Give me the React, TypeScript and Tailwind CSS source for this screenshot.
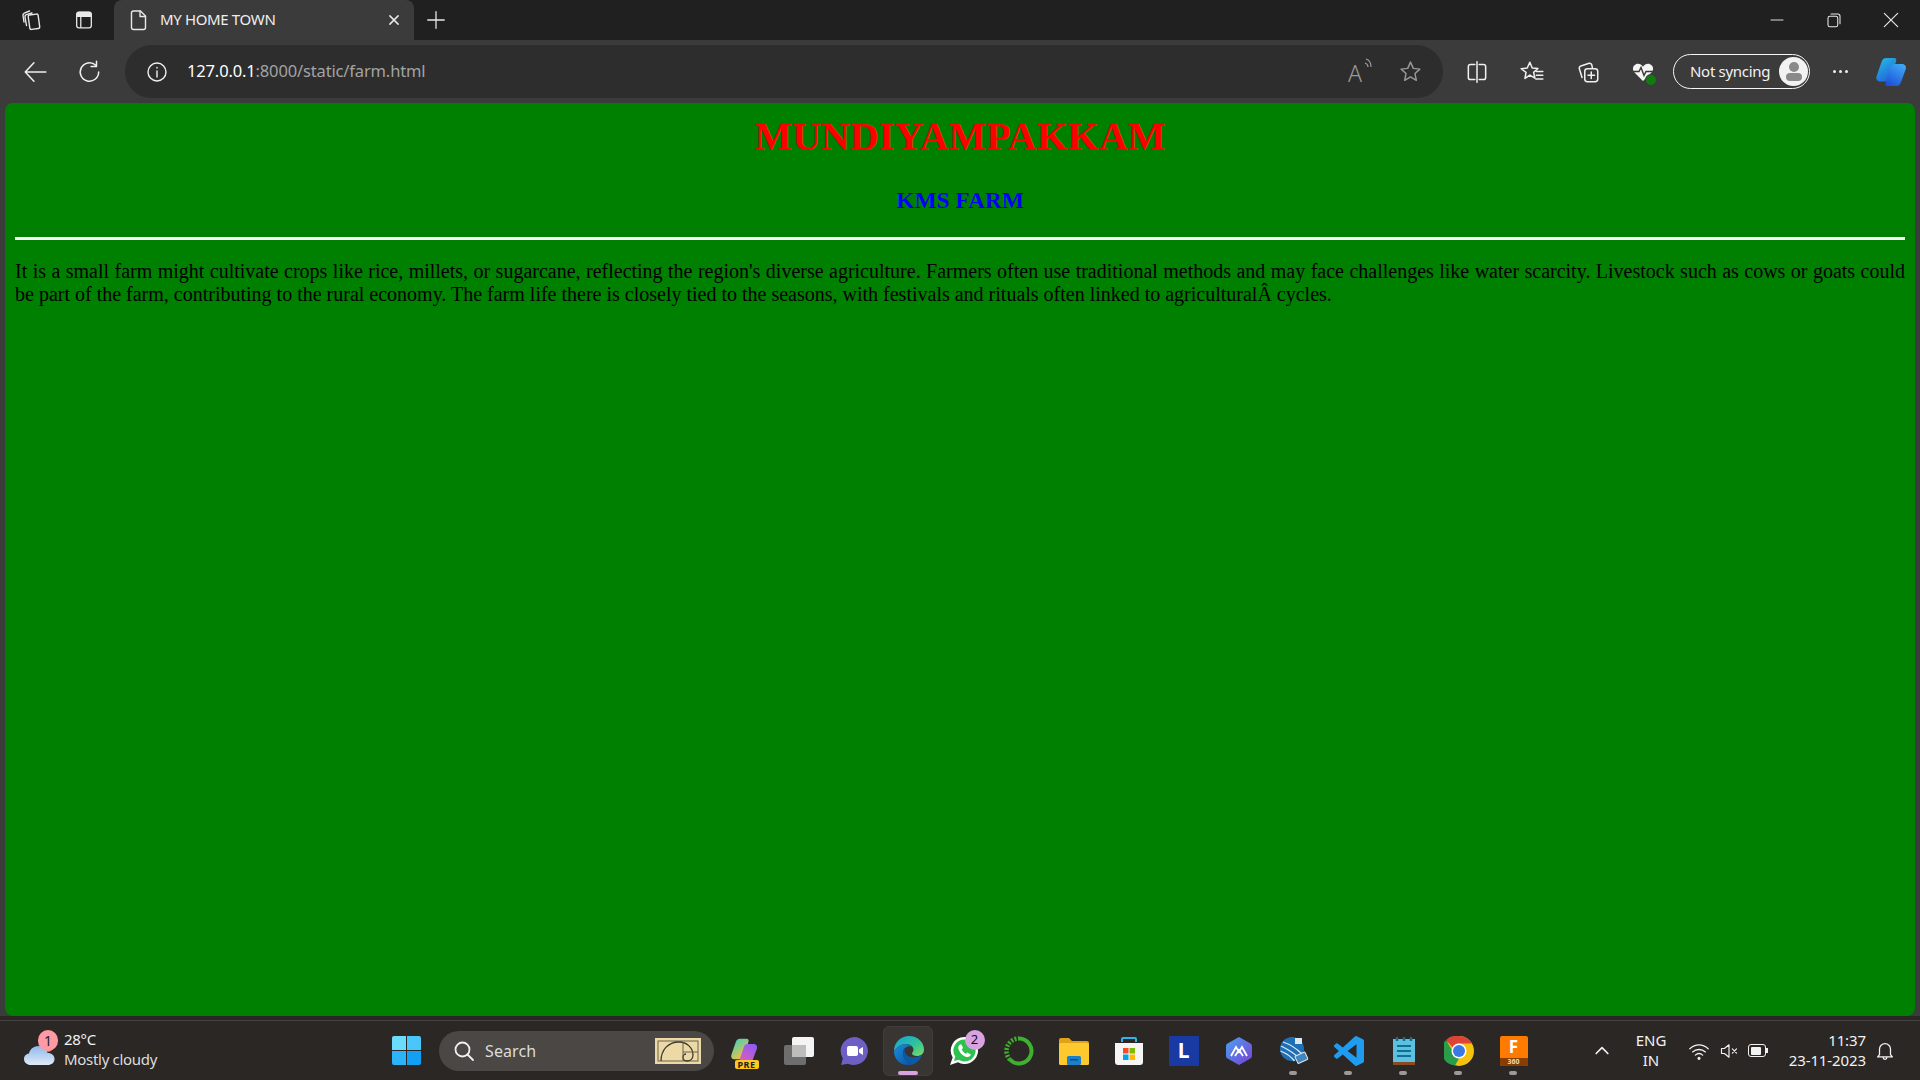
import type { ReactNode } from "react";

const uiFont = "font-['Noto_Sans','Open_Sans',sans-serif]";

function Svg({ size = 20, className = "", children, box = "0 0 24 24" }: { size?: number; className?: string; children: ReactNode; box?: string }) {
  return (
    <svg width={size} height={size} viewBox={box} fill="none" stroke="currentColor" strokeWidth="1.4" strokeLinecap="round" strokeLinejoin="round" className={className}>
      {children}
    </svg>
  );
}

function TabStrip() {
  return (
    <div className="flex h-10 items-stretch bg-[#202020] text-[#e8e8e8]">
      <div className="flex w-[114px] items-center">
        <div className="flex w-[64px] justify-center">
          <Svg size={24}>
            <rect x="9" y="6.5" width="10" height="14.5" rx="1.5" transform="rotate(-8 14 14)" />
            <path d="M6.5 17.5 5 9c-.2-1.2.4-2 1.4-2.3L12 5" />
            <path d="M4 14 3 7.5c-.2-1.2.3-2 1.3-2.4L9.500 3" />
          </Svg>
        </div>
        <div className="flex w-[40px] justify-center">
          <Svg size={22}>
            <rect x="4" y="3.5" width="16" height="17" rx="2.5" />
            <path d="M4.5 5.5c0-1 .8-1.7 1.7-1.7h11.600c1 0 1.700.7 1.700 1.700V8H4.500z" fill="currentColor" />
            <path d="M8.500 8v12" />
          </Svg>
        </div>
      </div>
      <div className="flex w-[300px] items-center rounded-t-lg bg-[#3b3b3b] pl-[14px] pr-[11px]">
        <Svg size={24} className="-ml-[1px]">
          <path d="M6.500 3h7l5 5v11.500a2 2 0 0 1-2 2h-10a2 2 0 0 1-2-2v-14.500a2 2 0 0 1 2-2z" />
          <path d="M13 3v5.500h5.500" />
        </Svg>
        <span className={`${uiFont} ml-[9px] -mt-[2px] flex-1 text-[15px] tracking-[-0.35px] text-[#eeeeee]`}>MY HOME TOWN</span>
        <Svg size={18}>
          <path d="m6.500 6.500 11 11M17.500 6.500l-11 11" strokeWidth="2" />
        </Svg>
      </div>
      <div className="flex w-[43px] items-center justify-center">
        <Svg size={22}>
          <path d="M12 3v18M3 12h18" />
        </Svg>
      </div>
      <div className="flex-1" />
      <div className="flex items-center pr-[1px]">
        <div className="flex w-[57px] justify-center">
          <Svg size={16}>
            <path d="M3 12h18" />
          </Svg>
        </div>
        <div className="flex w-[57px] justify-center">
          <Svg size={18}>
            <rect x="4" y="7" width="13" height="14" rx="2.500" />
            <path d="M8 4h9a3 3 0 0 1 3 3v10" />
          </Svg>
        </div>
        <div className="flex w-[57px] justify-center">
          <Svg size={20}>
            <path d="m4 4 16 16M20 4 4 20" />
          </Svg>
        </div>
      </div>
    </div>
  );
}

function Toolbar() {
  return (
    <div className="flex h-[63px] items-center bg-[#3b3b3b] text-[#f0f0f0]">
      <div className="flex w-[70px] justify-center">
        <Svg size={26}>
          <path d="M3 12h19M11 3.500 3 12l8 8.500" />
        </Svg>
      </div>
      <div className="flex w-[40px] justify-center">
        <Svg size={26}>
          <path d="M20 12a8.500 8.500 0 1 1-2.800-6.300" />
          <path d="M18 2v5h-5" />
        </Svg>
      </div>
      <div className="ml-[15px] flex h-[53px] w-[1318px] items-center rounded-full bg-[#2d2d2d] pl-[20px] pr-[20px]">
        <Svg size={24}>
          <circle cx="12" cy="12" r="9" />
          <path d="M12 11v6M12 7.500v.5" />
        </Svg>
        <span className={`${uiFont} ml-[18px] flex-1 text-[16.500px] tracking-[-0.15px] text-[#a3a3a3]`}>
          <span className="text-white">127.0.0.1</span>:8000/static/farm.html
        </span>
        <div className="flex items-center gap-[24px] text-[#999999]">
          <div className="relative h-6 w-6">
            <span className={`${uiFont} absolute left-[-2px] top-[-4px] text-[23px] font-light`}>A</span>
            <svg width="10" height="14" viewBox="0 0 10 14" fill="none" stroke="currentColor" strokeWidth="1.200" className="absolute right-[0px] top-[-2px]">
              <path d="M2 1c3.500 1 5 4 5 8M1 5c2 .7 3 2.300 3 4" />
            </svg>
          </div>
          <Svg size={25}>
            <path d="m12 3 2.700 6 6.300.7-4.700 4.300 1.300 6.500L12 17.200l-5.600 3.300 1.300-6.500L3 9.700 9.300 9z" />
          </Svg>
        </div>
      </div>
      <div className="ml-[6px] flex w-[55px] justify-center">
        <Svg size={26}>
          <path d="M10 5H6a2 2 0 0 0-2 2v10a2 2 0 0 0 2 2h4M14 5h4a2 2 0 0 1 2 2v10a2 2 0 0 1-2 2h-4M12 2.500v19" />
        </Svg>
      </div>
      <div className="flex w-[56px] justify-center">
        <Svg size={26}>
          <path d="m10 3 2.200 5.300 5.300.5-4 3.600 1.200 5.300-4.700-2.800-4.500 3 1-5.500L2 9l5.600-.7z" />
          <path d="M16 11.500h6M16 15h6M15.500 18.500H22" />
        </Svg>
      </div>
      <div className="flex w-[55px] justify-center">
        <Svg size={26}>
          <rect x="9" y="9" width="12" height="12" rx="2.500" />
          <path d="M15 12v6M12 15h6M6.500 17 4 9a2 2 0 0 1 1.400-2.500L13 4a2 2 0 0 1 2.500 1.500L16 8" />
        </Svg>
      </div>
      <div className="relative flex w-[55px] justify-center">
        <svg width="24" height="24" viewBox="0 0 24 24">
          <path d="M12 21 3.500 12.500C1 10 1.500 5.500 5 4.200c2.700-1 5.500.2 7 2.500 1.500-2.300 4.300-3.500 7-2.500 3.500 1.300 4 5.800 1.500 8.300z" fill="#f5f5f5" />
          <path d="M2 11.500h6l2-4 3 8 2-4h7" fill="none" stroke="#3b3b3b" strokeWidth="1.500" />
        </svg>
        <span className="absolute left-[31px] top-[15px] h-[10px] w-[10px] rounded-full bg-[#107c10] ring-1 ring-[#3b3b3b]" />
      </div>
      <div className="ml-[3px] flex h-[35px] w-[137px] items-center justify-between rounded-full border border-[#f5f5f5] pl-[16px] pr-[1px]">
        <span className={`${uiFont} text-[15px] tracking-[-0.3px] text-[#f2f2f2]`}>Not syncing</span>
        <div className="flex h-[29px] w-[29px] flex-col items-center justify-center rounded-full bg-[#f2f2f2]">
          <span className="h-[10px] w-[10px] rounded-full bg-[#8a8a8a]" />
          <span className="mt-[1px] h-[8px] w-[16px] rounded-full bg-[#8a8a8a]" />
        </div>
      </div>
      <div className="ml-[10px] flex w-[40px] justify-center gap-[3px]">
        <span className="h-[3px] w-[3px] rounded-full bg-[#f0f0f0]" />
        <span className="h-[3px] w-[3px] rounded-full bg-[#f0f0f0]" />
        <span className="h-[3px] w-[3px] rounded-full bg-[#f0f0f0]" />
      </div>
      <div className="ml-[15px] flex justify-center">
        <CopilotIcon size={32} />
      </div>
    </div>
  );
}

function CopilotIcon({ size, variant = "blue" }: { size: number; variant?: "blue" | "pre" }) {
  const a = variant === "blue" ? ["#22c3e6", "#2563d9"] : ["#2fd0c8", "#f5c23d"];
  const b = variant === "blue" ? ["#1d4fd8", "#3fa9f5"] : ["#e35db5", "#8b5cf6"];
  const id = variant;
  return (
    <svg width={size} height={size} viewBox="0 0 32 32">
      <defs>
        <linearGradient id={`${id}a`} x1="0" y1="0" x2="0.6" y2="1">
          <stop offset="0" stopColor={a[0]} />
          <stop offset="1" stopColor={a[1]} />
        </linearGradient>
        <linearGradient id={`${id}b`} x1="0.2" y1="1" x2="0.8" y2="0">
          <stop offset="0" stopColor={b[0]} />
          <stop offset="1" stopColor={b[1]} />
        </linearGradient>
      </defs>
      <path d="M11 2h8c1.800 0 2.700 1.200 2.200 3L15.500 23c-.5 1.500-1.500 2.500-3 2.500H5C2 25.500.8 23 1.500 20.500L6.500 6C7.300 3.500 9 2 11 2z" fill={`url(#${id}a)`} />
      <path d="M20 8h7c3 0 4.500 2.500 3.800 5L26 26c-.8 2.500-2.500 4-4.500 4H12c-1.500 0-2-1-1.600-2.200L16 11c.6-2 2-3 4-3z" fill={`url(#${id}b)`} />
    </svg>
  );
}

function WeatherIcon() {
  return (
    <div className="relative h-[36px] w-[36px]">
      <svg width="36" height="36" viewBox="0 0 36 36" className="absolute left-[1px] top-0">
        <defs>
          <linearGradient id="cloud" x1="0" y1="0" x2="0" y2="1">
            <stop offset="0" stopColor="#8fb8ea" />
            <stop offset="1" stopColor="#dfeaf8" />
          </linearGradient>
        </defs>
        <circle cx="25" cy="14" r="5" fill="#e8801f" />
        <path d="M8 32c-4 0-7-2.500-7-6 0-3 2.200-5.200 5-5.600C7 16 11 13 15.500 13c4.500 0 8 2.800 9 7 4-.2 7 2.300 7 6s-3 6-7 6z" fill="url(#cloud)" />
      </svg>
      <span className="absolute left-[16px] top-[-3px] flex h-[21px] w-[20px] items-center justify-center rounded-full bg-[#ff99a4] text-[14px] text-[#222222]">1</span>
    </div>
  );
}

function EdgeIcon() {
  return (
    <svg width="32" height="32" viewBox="0 0 32 32">
      <defs>
        <linearGradient id="edgeA" x1="0" y1="0" x2="1" y2="1">
          <stop offset="0" stopColor="#17a2e0" />
          <stop offset="0.55" stopColor="#2fc29a" />
          <stop offset="1" stopColor="#7fdc64" />
        </linearGradient>
        <linearGradient id="edgeB" x1="0" y1="0" x2="1" y2="1">
          <stop offset="0" stopColor="#1a8fdd" />
          <stop offset="1" stopColor="#0b4f9e" />
        </linearGradient>
      </defs>
      <path d="M1 16C1 7.500 7.800 1 16 1c8.500 0 15 6 15 13.500 0 4.500-3.500 6.500-7 6.500-3 0-5-1-5-2.500 0-1 1.500-1.500 1.500-4C20.500 11.500 17 9 13 9 8 9 4 12 1 16z" fill="url(#edgeA)" />
      <path d="M1 16c3-4 7-7 12-7 3 0 5 1 6 2.500-4-1-9 1-9 6.500 0 5 4 10 10 11.500-1.500.4-2.800.5-4 .5C7.800 31 1 24.500 1 16z" fill="url(#edgeB)" />
      <path d="M20 29.500c-6-1.500-10-6.500-10-11.500 0-2 .7-3.500 1.800-4.600-.8 3.500 1 7.600 6.200 8.600 4.500.9 8-.5 11-2.500-1.300 4.500-4.500 8.500-9 10z" fill="#0c59a4" />
    </svg>
  );
}

function ChromeIcon() {
  return (
    <svg width="30" height="30" viewBox="0 0 30 30">
      <circle cx="15" cy="15" r="15" fill="#f4c20d" />
      <path d="M15 0a15 15 0 0 1 13 7.500H15a7.500 7.500 0 0 0-6.500 3.750L2 3.900A15 15 0 0 1 15 0z" fill="#db4437" />
      <path d="M2 3.900 8.500 15a7.500 7.500 0 0 0 6.500 7.500l-4 7A15 15 0 0 1 2 3.900z" fill="#2a9d4a" />
      <circle cx="15" cy="15" r="7.500" fill="#ffffff" />
      <circle cx="15" cy="15" r="6" fill="#3b78e7" />
    </svg>
  );
}

function Pin({ children, dot = false, active = false }: { children: ReactNode; dot?: boolean; active?: boolean }) {
  return (
    <div className="relative flex h-[50px] w-[55px] items-center justify-center">
      {active && <span className="absolute inset-y-0 left-[2px] w-[50px] rounded-md border border-[#403d3b] bg-[#383533]" />}
      <div className="relative">{children}</div>
      {dot && <span className="absolute bottom-[1px] left-[23px] h-[4px] w-[8px] rounded-full bg-[#9a9a9a]" />}
      {active && <span className="absolute bottom-[1px] left-[17px] h-[4px] w-[20px] rounded-full bg-[#d8a3e0]" />}
    </div>
  );
}

function Taskbar() {
  return (
    <div className={`${uiFont} flex h-[60px] items-center border-t border-[#454341] bg-[#2a2725] text-[#f2f2f2]`}>
      <div className="flex w-[392px] items-center pl-[22px]">
        <WeatherIcon />
        <div className="ml-[6px] -mt-[3px] flex flex-col text-[15px] leading-[20px] tracking-[-0.3px]">
          <span>28°C</span>
          <span className="text-[#dddddd]">Mostly cloudy</span>
        </div>
      </div>
      {/* start button */}
      <div className="grid h-[29px] w-[29px] grid-cols-2 gap-[1px]">
        <span className="rounded-tl-[2px] bg-[#6bdcfb]" />
        <span className="rounded-tr-[2px] bg-[#4bc6fa]" />
        <span className="rounded-bl-[2px] bg-[#2cb4f8]" />
        <span className="rounded-br-[2px] bg-[#12a0f5]" />
      </div>
      <div className="ml-[18px] flex h-[40px] w-[275px] items-center rounded-full bg-[#4a4745] pl-[13px] pr-[13px]">
        <Svg size={24} className="text-[#f0f0f0]">
          <circle cx="10.500" cy="10.500" r="7" strokeWidth="1.800" />
          <path d="m15.500 15.500 5.500 5.500" strokeWidth="1.800" />
        </Svg>
        <span className="ml-[9px] flex-1 text-[16px] tracking-[0.1px] text-[#dcdcdc]">Search</span>
        <svg width="46" height="26" viewBox="0 0 46 26">
          <rect width="46" height="26" fill="#ecd9a6" />
          <rect x="3" y="3" width="40" height="20" fill="none" stroke="#6b6350" />
          <path d="M6 23c0-11 7-19 18-19 8 0 14 6 14 13 0 4-3 6-6 6-3 0-4-2-4-4 0-2 2-3 3-3" fill="none" stroke="#3c3a30" strokeWidth="1.300" />
          <path d="M28 4v19M28 14h15" stroke="#6b6350" fill="none" />
        </svg>
      </div>
      <div className="ml-[2px] flex items-center">
        <Pin>
          <div className="relative">
            <CopilotIcon size={28} variant="pre" />
            <span className="absolute bottom-[-4px] left-[5px] rounded-[2px] bg-[#ffc81e] px-[3px] text-[9px] font-bold leading-[9px] tracking-[0.5px] text-[#222222]">PRE</span>
          </div>
        </Pin>
        <Pin>
          <div className="relative h-[28px] w-[30px]">
            <span className="absolute bottom-0 left-0 h-[20px] w-[22px] rounded-[2px] bg-[#6e6e6e]" />
            <span className="absolute right-0 top-0 h-[20px] w-[22px] rounded-[2px] bg-[#f4f4f4]" />
            <span className="absolute left-[8px] top-[8px] h-[12px] w-[14px] bg-[#bdbdbd]" />
          </div>
        </Pin>
        <Pin>
          <svg width="30" height="30" viewBox="0 0 30 30">
            <path d="M15 1a14 14 0 1 1-6 26.700L2 29l1.800-6.500A14 14 0 0 1 15 1z" fill="#6d5fc4" />
            <rect x="8" y="10" width="11" height="10" rx="2" fill="#ffffff" />
            <path d="m20 13.500 4-2.500v8l-4-2.500z" fill="#ffffff" />
          </svg>
        </Pin>
        <Pin active>
          <EdgeIcon />
        </Pin>
        <Pin>
          <div className="relative">
            <svg width="30" height="30" viewBox="0 0 30 30">
              <path d="M15.500 1a13.500 13.500 0 1 1-6.500 25.300L1 29l2.700-7.600A13.500 13.500 0 0 1 15.500 1z" fill="#ffffff" />
              <path d="M15.500 3.500a11 11 0 1 1-5.800 20.300L5 25l1.300-4.400A11 11 0 0 1 15.500 3.500z" fill="#2fc14f" />
              <path d="M11 8.500c-1.500 1-2.500 3-1 6 1.500 3 4.500 6 8 6.500 2 .3 3.500-1 3.800-2.500l-3.300-2-1.500 1.300c-2-.8-3.500-2.500-4.300-4.300l1.300-1.500-1.500-3.500z" fill="#ffffff" />
            </svg>
            <span className="absolute right-[-6px] top-[-6px] flex h-[20px] w-[20px] items-center justify-center rounded-full bg-[#d8a3e0] text-[13px] text-[#111111]">2</span>
          </div>
        </Pin>
        <Pin>
          <svg width="30" height="30" viewBox="0 0 30 30" fill="none">
            <path d="M15 2.500a12.500 12.500 0 1 1-9 21.200" stroke="#3fb02f" strokeWidth="4" />
            <path d="M6 23.700A12.500 12.500 0 0 1 15 2.500" stroke="#3fb02f" strokeWidth="4.500" strokeDasharray="2 1.500" />
          </svg>
        </Pin>
        <Pin>
          <svg width="31" height="28" viewBox="0 0 31 28">
            <path d="M1 3a2 2 0 0 1 2-2h8l3 3h15a2 2 0 0 1 2 2v3H1z" fill="#e0a216" />
            <rect x="1" y="6" width="30" height="22" rx="1.500" fill="#fdc92f" />
            <rect x="9" y="19" width="14" height="9" rx="1.500" fill="#1b7fc9" />
            <rect x="12" y="22" width="8" height="1.500" fill="#0d4f86" />
          </svg>
        </Pin>
        <Pin>
          <svg width="30" height="30" viewBox="0 0 30 30">
            <path d="M8 6V3a1 1 0 0 1 1-1h12a1 1 0 0 1 1 1v3" fill="none" stroke="#2cb5f0" strokeWidth="2" />
            <path d="M1 7h28v19a3 3 0 0 1-3 3H4a3 3 0 0 1-3-3z" fill="#f5f5f5" />
            <rect x="9" y="12" width="5.500" height="5.500" fill="#f25022" />
            <rect x="15.500" y="12" width="5.500" height="5.500" fill="#7fba00" />
            <rect x="9" y="18.500" width="5.500" height="5.500" fill="#00a4ef" />
            <rect x="15.500" y="18.500" width="5.500" height="5.500" fill="#ffb900" />
          </svg>
        </Pin>
        <Pin>
          <div className="flex h-[30px] w-[30px] items-center justify-center bg-[#1a3aa3] text-[21px] font-bold leading-none text-white">L</div>
        </Pin>
        <Pin>
          <svg width="28" height="30" viewBox="0 0 28 30">
            <defs>
              <linearGradient id="arc" x1="0" y1="0" x2="1" y2="1">
                <stop offset="0" stopColor="#4aa3f0" />
                <stop offset="1" stopColor="#7a3fd6" />
              </linearGradient>
            </defs>
            <path d="M14 1 25.500 7.500a3 3 0 0 1 1.500 2.600v9.800a3 3 0 0 1-1.500 2.600L14 29 2.500 22.500A3 3 0 0 1 1 19.900v-9.800a3 3 0 0 1 1.500-2.600z" fill="url(#arc)" />
            <path d="M6 20 11 11l3 5 3-5 5 9M10 20l4-6 4 6" fill="none" stroke="#ffffff" strokeWidth="1.800" />
          </svg>
        </Pin>
        <Pin dot>
          <svg width="30" height="30" viewBox="0 0 30 30">
            <circle cx="13" cy="13" r="12" fill="#1f6fb5" />
            <path d="M2 10c6 3 14 8 18 12M1.500 15c5 2 11 6 14 10M4 6c6 2 14 7 19 12" fill="none" stroke="#d8e8f5" strokeWidth="1.300" />
            <path d="M16 2h7v6h-7z" fill="#dbe8f3" />
            <rect x="17" y="18" width="11" height="8" rx="1" transform="rotate(-25 22 22)" fill="#3f87c4" stroke="#e4e4e4" />
          </svg>
        </Pin>
        <Pin dot>
          <svg width="30" height="30" viewBox="0 0 24 24">
            <path d="M23.150 2.587 18.210.21a1.494 1.494 0 0 0-1.705.29l-9.460 8.630-4.120-3.128a.999.999 0 0 0-1.276.057L.327 7.261A1 1 0 0 0 .326 8.740L3.899 12 .326 15.260a1 1 0 0 0 .001 1.479L1.650 17.940a.999.999 0 0 0 1.276.057l4.120-3.128 9.460 8.630a1.492 1.492 0 0 0 1.704.29l4.942-2.377A1.500 1.500 0 0 0 24 20.060V3.939a1.500 1.500 0 0 0-.85-1.352zm-5.146 14.861L10.826 12l7.178-5.448v10.896z" fill="#1f9cf0" />
          </svg>
        </Pin>
        <Pin dot>
          <svg width="24" height="30" viewBox="0 0 24 30">
            <rect x="1" y="3" width="22" height="25" fill="#5cc0de" />
            <rect x="1" y="26" width="22" height="3" fill="#8a4b20" />
            <path d="M5 1v4M12 1v4M19 1v4" stroke="#0f6f94" strokeWidth="2.500" />
            <path d="M5 10h14M5 15h14M5 20h14" stroke="#0f6f94" strokeWidth="2" />
          </svg>
        </Pin>
        <Pin dot>
          <ChromeIcon />
        </Pin>
        <Pin dot>
          <div className="flex h-[30px] w-[28px] flex-col overflow-hidden rounded-[2px] bg-[#ff7a00]">
            <span className="flex-1 text-center text-[17px] font-bold leading-[22px] text-white">F</span>
            <span className="bg-[#8a3d00] text-center text-[7px] font-bold leading-[8px] text-[#f5d6b0]">360</span>
          </div>
        </Pin>
      </div>
      <div className="flex-1" />
      <div className="flex items-center pr-[24px]">
        <Svg size={20} className="mr-[19px]">
          <path d="m5 15 7-7 7 7" strokeWidth="2" />
        </Svg>
        <div className="-mt-[2px] flex w-[40px] flex-col items-center text-[15px] leading-[20px]">
          <span>ENG</span>
          <span>IN</span>
        </div>
        <Svg size={22} className="ml-[17px]">
          <path d="M2 9.500c6-5.500 14-5.500 20 0M5 13c4-3.500 10-3.500 14 0M8 16.500c2.300-2 5.700-2 8 0" />
          <circle cx="12" cy="20" r="1" fill="currentColor" />
        </Svg>
        <Svg size={20} className="ml-[9px]">
          <path d="M3 9v6h3.500L12 19.500v-15L6.500 9zM16 9.500l5 5M21 9.500l-5 5" />
        </Svg>
        <div className="ml-[9px] flex items-center">
          <div className="flex h-[13px] w-[18px] items-center rounded-[3px] border-[1.500px] border-[#f2f2f2] p-[1.500px]">
            <span className="h-full w-[10px] rounded-[1px] bg-[#f2f2f2]" />
          </div>
          <span className="h-[5px] w-[2px] bg-[#f2f2f2]" />
        </div>
        <div className="ml-[20px] -mt-[2px] flex w-[78px] flex-col items-end text-[15px] leading-[20px] tracking-[-0.1px]">
          <span>11:37</span>
          <span className="whitespace-nowrap">23-11-2023</span>
        </div>
        <Svg size={22} className="ml-[8px]">
          <path d="M6 16V10a6 6 0 0 1 12 0v6l2 2.500H4zM10 19a2 2 0 0 0 4 0" />
        </Svg>
      </div>
    </div>
  );
}

export default function App() {
  return (
    <div className="flex h-[1080px] w-[1920px] flex-col overflow-hidden bg-[#3b3b3b]">
      <TabStrip />
      <Toolbar />
      <main className="mx-[5px] h-[913px] rounded-lg bg-[#008000] px-[10px] pt-[11px] font-['Liberation_Serif',serif]">
        <h1 className="text-center text-[40px] font-bold leading-[46px] text-[#ff0000]">MUNDIYAMPAKKAM</h1>
        <h2 className="mt-[27px] text-center text-[23.4px] font-bold leading-[27px] text-[#0000ff]">KMS FARM</h2>
        <hr className="mt-[23px] h-[3px] border-0 bg-[#f5f5f5]" />
        <p className="mt-[20px] text-justify text-[20px] leading-[23px] text-black">
          It is a small farm might cultivate crops like rice, millets, or sugarcane, reflecting the region's diverse agriculture. Farmers often use traditional methods and may face challenges like water scarcity. Livestock such as cows or goats could be part of the farm, contributing to the rural economy. The farm life there is closely tied to the seasons, with festivals and rituals often linked to agriculturalÂ cycles.
        </p>
      </main>
      <div className="h-[4px] bg-[#2a2725]" />
      <Taskbar />
    </div>
  );
}
